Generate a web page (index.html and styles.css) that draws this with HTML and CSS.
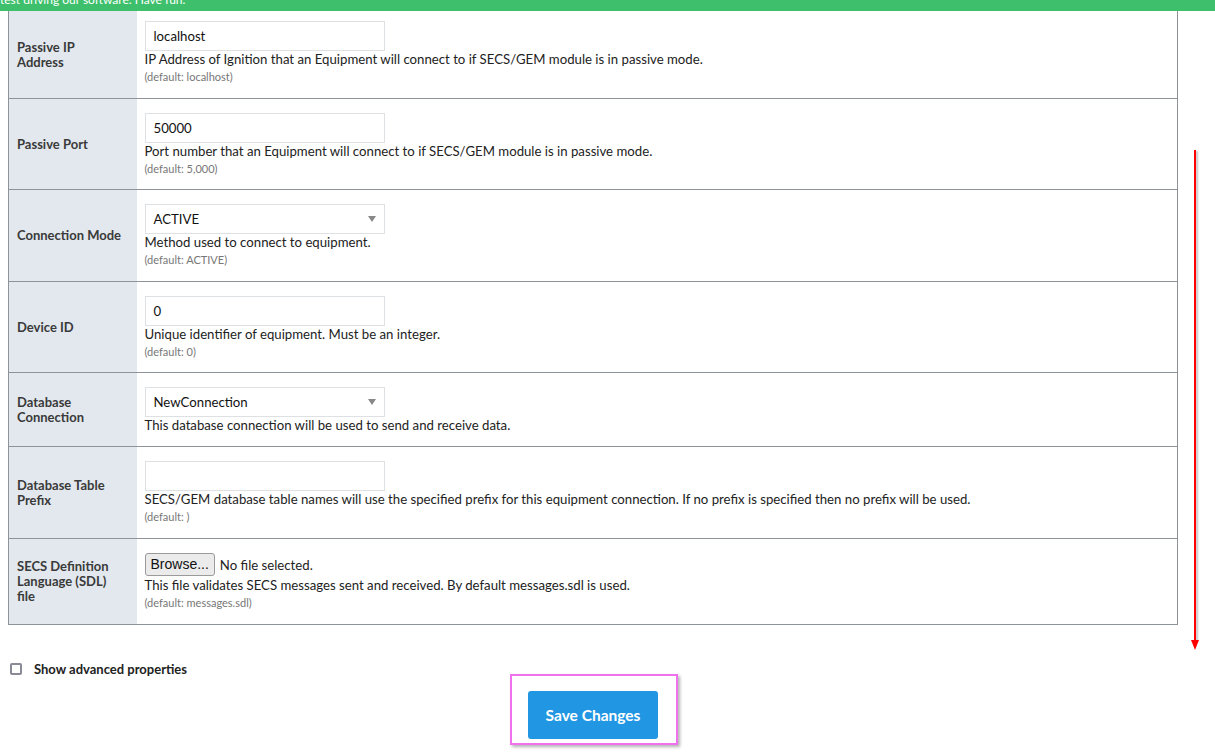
FILE: index.html
```html
<!DOCTYPE html>
<html>
<head lang="en">
	<meta charset="UTF-8">
	<title>Equipment Connection</title>
	<link rel="stylesheet" href="styles.css">
</head>
<body>

<div class="trial-bar">
	<span>test driving our software. Have fun.</span>
</div>

<table class="settings">
	<tr class="first">
		<td class="label">Passive IP Address</td>
		<td class="field">
			<div class="text-input">localhost</div>
			<p class="desc">IP Address of Ignition that an Equipment will connect to if SECS/GEM module is in passive mode.</p>
			<p class="default">(default: localhost)</p>
		</td>
	</tr>
	<tr>
		<td class="label">Passive Port</td>
		<td class="field">
			<div class="text-input">50000</div>
			<p class="desc">Port number that an Equipment will connect to if SECS/GEM module is in passive mode.</p>
			<p class="default">(default: 5,000)</p>
		</td>
	</tr>
	<tr>
		<td class="label">Connection Mode</td>
		<td class="field">
			<div class="text-input select">ACTIVE</div>
			<p class="desc">Method used to connect to equipment.</p>
			<p class="default">(default: ACTIVE)</p>
		</td>
	</tr>
	<tr>
		<td class="label">Device ID</td>
		<td class="field">
			<div class="text-input">0</div>
			<p class="desc">Unique identifier of equipment. Must be an integer.</p>
			<p class="default">(default: 0)</p>
		</td>
	</tr>
	<tr>
		<td class="label">Database Connection</td>
		<td class="field">
			<div class="text-input select">NewConnection</div>
			<p class="desc">This database connection will be used to send and receive data.</p>
		</td>
	</tr>
	<tr>
		<td class="label">Database Table Prefix</td>
		<td class="field">
			<div class="text-input"></div>
			<p class="desc">SECS/GEM database table names will use the specified prefix for this equipment connection. If no prefix is specified then no prefix will be used.</p>
			<p class="default">(default: )</p>
		</td>
	</tr>
	<tr>
		<td class="label">SECS Definition Language (SDL) file</td>
		<td class="field">
			<div class="file-input">
				<span class="browse">Browse...</span>
				<span>No file selected.</span>
			</div>
			<p class="desc">This file validates SECS messages sent and received. By default messages.sdl is used.</p>
			<p class="default">(default: messages.sdl)</p>
		</td>
	</tr>
</table>

<label class="advanced">
	<span class="checkbox"></span>
	Show advanced properties
</label>

<div class="actions">
	<div class="highlight">
		<button class="save">Save Changes</button>
	</div>
</div>

<div class="scroll-arrow"></div>

</body>
</html>
```

FILE: styles.css
```css
* {
	box-sizing: border-box;
	margin: 0;
	padding: 0;
}

html, body {
	height: 100%;
	overflow: hidden;
}

body {
	font-family: Lato, "Liberation Sans", sans-serif;
	font-size: 13.2px;
	color: #222;
	background: #fff;
	position: relative;
}

.trial-bar {
	height: 11px;
	background: #3dbf6b;
	color: #fff;
	overflow: hidden;
	font-size: 12px;
	line-height: 12px;
}

.trial-bar span {
	display: block;
	margin-top: -6px;
}

.settings {
	width: 1170px;
	margin-left: 8px;
	border-collapse: collapse;
	border: 1px solid #8e9399;
	border-top: none;
}

.settings td {
	border-bottom: 1px solid #8e9399;
}

.label {
	width: 128px;
	background: #e2e8ee;
	font-size: 13px;
	font-weight: bold;
	color: #3a3a3a;
	line-height: 15px;
	padding: 1px 14px 0 8px;
	vertical-align: middle;
}

.field {
	padding: 14px 8px 12px 8px;
	vertical-align: top;
}

.first .field {
	padding-top: 10px;
}

.text-input {
	width: 240px;
	height: 30px;
	border: 1px solid #dde1e4;
	padding: 0 8px;
	line-height: 28px;
	color: #111;
	position: relative;
}

.select::after {
	content: "";
	position: absolute;
	right: 8px;
	top: 11px;
	border-left: 4px solid transparent;
	border-right: 4px solid transparent;
	border-top: 6px solid #888;
}

.desc {
	line-height: 17px;
}

.default {
	font-size: 11px;
	line-height: 17.6px;
	color: #777;
}

.file-input {
	height: 24px;
	display: flex;
	align-items: center;
	gap: 5px;
}

.browse {
	font-family: "Liberation Sans", sans-serif;
	font-size: 14px;
	color: #111;
	background: #ebebeb;
	border: 1px solid #9a9a9a;
	border-radius: 3px;
	height: 23px;
	line-height: 21px;
	padding: 0 5px;
}

.advanced {
	display: flex;
	align-items: center;
	gap: 12px;
	margin: 37px 0 0 10px;
	font-size: 13px;
	font-weight: bold;
	color: #222;
	line-height: 15px;
}

.checkbox {
	width: 12px;
	height: 12px;
	border: 2px solid #8a8a96;
	border-radius: 2px;
}

.actions {
	display: flex;
	justify-content: center;
	margin-top: -3px;
	padding-right: 27px;
}

.highlight {
	border: 2px solid #f070ee;
	padding: 15px 18px 4px 16px;
	box-shadow: 2px 2px 3px rgba(0, 0, 0, 0.3);
}

.save {
	width: 130px;
	height: 48px;
	background: #2196e3;
	color: #fff;
	border: none;
	border-radius: 3px;
	font-family: Lato, "Liberation Sans", sans-serif;
	font-weight: bold;
	font-size: 15.5px;
}

.scroll-arrow {
	position: absolute;
	left: 1194px;
	top: 150px;
	width: 2px;
	height: 490px;
	background: #f00;
	box-shadow: 2px 1px 2px rgba(0, 0, 0, 0.25);
}

.scroll-arrow::after {
	content: "";
	position: absolute;
	left: -3px;
	bottom: -10px;
	border-left: 4px solid transparent;
	border-right: 4px solid transparent;
	border-top: 10px solid #f00;
}
```
